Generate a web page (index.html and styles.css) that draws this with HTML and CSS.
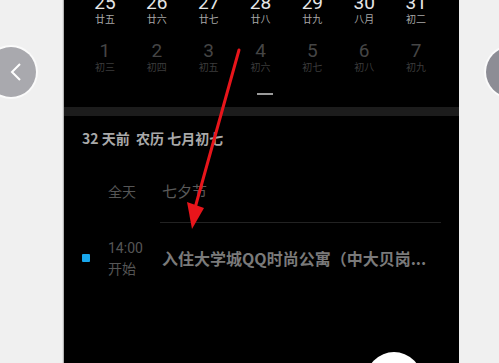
FILE: index.html
```html
<!DOCTYPE html>
<html lang="zh-CN">
<head>
<meta charset="utf-8">
<title>日历</title>
<link rel="stylesheet" href="styles.css">
</head>
<body>
<div class="stage">
  <div class="gutter"></div>
  <div class="screen">
    <div class="month">
      <div class="week now">
        <div class="day"><span class="num">25</span><span class="lunar">廿五</span></div>
        <div class="day"><span class="num">26</span><span class="lunar">廿六</span></div>
        <div class="day"><span class="num">27</span><span class="lunar">廿七</span></div>
        <div class="day"><span class="num">28</span><span class="lunar">廿八</span></div>
        <div class="day"><span class="num">29</span><span class="lunar">廿九</span></div>
        <div class="day"><span class="num">30</span><span class="lunar">八月</span></div>
        <div class="day"><span class="num">31</span><span class="lunar">初二</span></div>
      </div>
      <div class="week next">
        <div class="day"><span class="num">1</span><span class="lunar">初三</span></div>
        <div class="day"><span class="num">2</span><span class="lunar">初四</span></div>
        <div class="day"><span class="num">3</span><span class="lunar">初五</span></div>
        <div class="day"><span class="num">4</span><span class="lunar">初六</span></div>
        <div class="day"><span class="num">5</span><span class="lunar">初七</span></div>
        <div class="day"><span class="num">6</span><span class="lunar">初八</span></div>
        <div class="day"><span class="num">7</span><span class="lunar">初九</span></div>
      </div>
      <div class="handle-row"><span class="handle"></span></div>
    </div>
    <div class="band"></div>
    <div class="info">32 天前&nbsp;&nbsp;农历&nbsp;七月初七</div>
    <div class="event allday">
      <span class="marker none"></span>
      <span class="when">全天</span>
      <span class="title">七夕节</span>
    </div>
    <div class="divider"></div>
    <div class="event timed">
      <span class="marker blue"></span>
      <span class="when"><span>14:00</span><span>开始</span></span>
      <span class="title">入住大学城QQ时尚公寓（中大贝岗...</span>
    </div>
    <div class="fab"></div>
    <svg class="arrow" width="395" height="363" viewBox="0 0 395 363">
      <line x1="175" y1="50" x2="131" y2="208" stroke="#e8151b" stroke-width="3" stroke-linecap="round"/>
      <polygon points="123,202 140,208 128,229" fill="#e8151b"/>
    </svg>
  </div>
  <div class="gutter"></div>
  <div class="nav prev">
    <svg width="12" height="20" viewBox="0 0 12 20"><polyline points="10,2 2,10 10,18" fill="none" stroke="#ffffff" stroke-width="2"/></svg>
  </div>
  <div class="nav next-btn"></div>
</div>
</body>
</html>
```

FILE: styles.css
```css
html, body {
  margin: 0;
  padding: 0;
}
body {
  width: 499px;
  height: 363px;
  overflow: hidden;
  background: #f0f0f0;
  font-family: "Noto Sans CJK SC", "Noto Sans", sans-serif;
}
.stage {
  position: relative;
  display: flex;
  width: 499px;
  height: 363px;
}
.gutter {
  flex: 1;
}
.screen {
  position: relative;
  width: 395px;
  height: 363px;
  background: #000;
  overflow: hidden;
  flex: none;
  box-shadow: -1px 0 1px rgba(0,0,0,0.25);
}
.gutter:first-child {
  flex: none;
  width: 64px;
}
.month {
  margin-top: -7px;
  padding: 0 17px 0 15px;
}
.week {
  display: grid;
  grid-template-columns: repeat(7, 1fr);
  height: 48px;
}
.day {
  display: flex;
  flex-direction: column;
  align-items: center;
}
.num {
  font-family: Roboto, "Noto Sans", sans-serif;
  font-size: 19px;
  line-height: 20px;
}
.lunar {
  font-size: 10px;
  line-height: 12px;
}
.now .num { color: #e6e6e6; }
.now .lunar { color: #a8a8a8; }
.next .num { color: #454545; }
.next .lunar { color: #3c3c3c; }
.handle-row {
  display: flex;
  justify-content: center;
  padding-top: 4px;
  height: 14px;
}
.handle {
  width: 16px;
  height: 2px;
  background: #9a9a9a;
  margin-left: 8px;
}
.band {
  height: 9px;
  background: #1c1c1c;
}
.info {
  padding: 7px 0 0 18px;
  height: 30px;
  font-size: 14px;
  line-height: 30px;
  font-weight: bold;
  color: #a9a9a9;
}
.event {
  display: flex;
  align-items: center;
  padding-left: 18px;
}
.allday {
  height: 63px;
  margin-top: 6px;
}
.timed {
  height: 70px;
}
.marker {
  width: 8px;
  height: 8px;
  flex: none;
  margin-right: 18px;
  border-radius: 1px;
}
.marker.blue {
  background: #18a7ec;
}
.when {
  width: 54px;
  flex: none;
  display: flex;
  flex-direction: column;
  font-size: 14px;
  line-height: 20px;
  color: #565656;
}
.when span:first-child {
  font-family: Roboto, "Noto Sans", sans-serif;
}
.title {
  font-size: 15px;
  color: #5a5a5a;
  white-space: nowrap;
}
.timed .title {
  font-size: 16px;
  color: #7a7a7a;
  font-weight: bold;
}
.divider {
  height: 1px;
  background: #222;
  margin: 0 18px 0 96px;
}
.fab {
  position: absolute;
  left: 302px;
  top: 352px;
  width: 56px;
  height: 56px;
  border-radius: 50%;
  background: #fff;
}
.arrow {
  position: absolute;
  left: 0;
  top: 0;
}
.nav {
  position: absolute;
  top: 47px;
  width: 50px;
  height: 50px;
  border-radius: 50%;
  box-shadow: 0 0 0 2px rgba(255,255,255,0.7);
}
.nav.prev {
  left: -14px;
  background: #a9a9ae;
  display: flex;
  align-items: center;
  justify-content: center;
  padding-left: 10px;
  box-sizing: border-box;
}
.nav.next-btn {
  left: 486px;
  background: #8d8d95;
}
```
